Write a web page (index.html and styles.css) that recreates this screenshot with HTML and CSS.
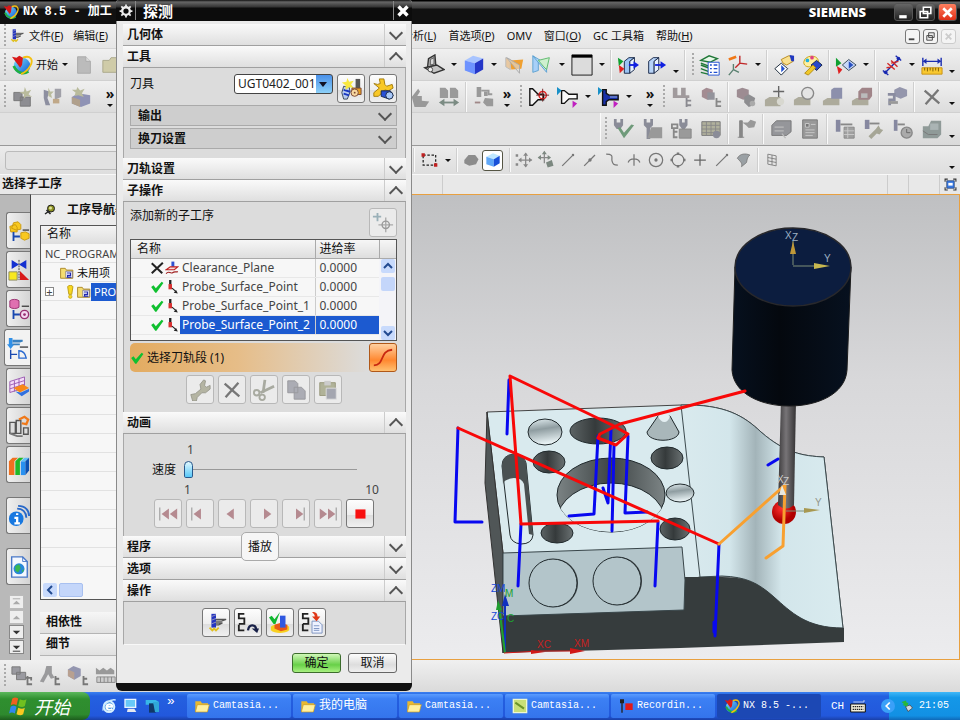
FILE: index.html
```html
<!DOCTYPE html>
<html lang="zh-CN">
<head>
    <meta charset="UTF-8">
    <meta name="viewport" content="width=device-width, initial-scale=1.0">
    <title>NX 8.5 - 加工</title>
    <link rel="stylesheet" href="styles.css">
</head>
<body>
    <!-- Icon sprite -->
    <svg class="sprite" aria-hidden="true">
        <defs>
            <linearGradient id="ball" x1="0" y1="0" x2="1" y2="1"><stop offset="0" stop-color="#7fe8ff"/><stop offset="1" stop-color="#0a50d0"/></linearGradient>
        </defs>
        <symbol id="nx" viewBox="0 0 24 24">
            <circle cx="12" cy="13" r="9" fill="url(#ball)"/>
            <path d="M3 13c3 7 10 10 16 6" fill="none" stroke="#20b040" stroke-width="3"/>
            <path d="M13 4c8-3 12 2 8 9-2 4-6 7-10 9" fill="none" stroke="#f4c010" stroke-width="2"/>
            <path d="M1 3l5 1 3-2 4 2-1 8-2 3z" fill="#d81818"/>
        </symbol>
        <symbol id="tool" viewBox="0 0 24 24">
            <path d="M7 2h5v15H7z" fill="#2434c0"/><path d="M7 5l5-2M7 9l5-2M7 13l5-2" stroke="#99b" stroke-width="1"/>
            <path d="M12 8h11l-5 2h-6M12 12h7l-4 2h-3" fill="none" stroke="#555" stroke-width="1.5"/>
            <path d="M5 17l3 3 2-2 2 2 3-3" fill="none" stroke="#e0c020" stroke-width="2"/>
        </symbol>
        <symbol id="doc" viewBox="0 0 24 24"><path d="M5 3h9l5 5v13H5z" fill="#bbb" stroke="#aaa"/><path d="M14 3v5h5" fill="#ddd" stroke="#aaa"/></symbol>
        <symbol id="folder" viewBox="0 0 24 24"><path d="M2 7h7l2-3h9v16H2z" fill="#cfcba8" stroke="#aaa78a"/></symbol>
        <symbol id="win-folder" viewBox="0 0 24 24"><path d="M2 5h8l2 3h9v12H2z" fill="#e8b830"/><path d="M5 10h18l-3 11H2z" fill="#fff0a0" stroke="#c8981c"/></symbol>
        <symbol id="parts" viewBox="0 0 24 24">
            <path d="M2 7h9v9H2zM9 12h11v10H9z" fill="#8d8d92" stroke="#777"/><path d="M14 1l2 5 5-2-3 5 4 3-6-1-3 3 0-5-5-2 5-1z" fill="#b9bb9c"/>
        </symbol>
        <symbol id="parts2" viewBox="0 0 24 24">
            <path d="M3 4l6 2-2 7 3 8H5L3 13z" fill="#8d8fa0"/><path d="M15 3h7v9l-7 3z" fill="#a0a0a8"/><path d="M13 14h7v5h-7z" fill="#c0a888"/><path d="M8 2l2 4 4 0-3 3 1 4-4-2z" fill="#b9bb9c"/>
        </symbol>
        <symbol id="parts3" viewBox="0 0 24 24">
            <path d="M2 12l7-4 13 2v9l-10 4-10-4z" fill="#8f93b5"/><path d="M2 12l9 3v8l-9-4z" fill="#b0a08c"/><path d="M8 1l3 4 5-2-3 5 2 4-6-2-4 1 1-4-4-3 5 0z" fill="#b9bb9c"/>
        </symbol>
        <symbol id="laptop" viewBox="0 0 24 24"><path d="M5 14l1-9 7-4 1 12z" fill="#b0b0b0" stroke="#333" stroke-width="1.5"/><path d="M8 12V6l4-2v7z" fill="#d8d8d8" stroke="#555"/><path d="M2 15l13-3 8 5-11 4z" fill="#c4c4c4" stroke="#333" stroke-width="1.5"/><circle cx="8" cy="17" r="2.500" fill="#eee" stroke="#444"/></symbol>
        <symbol id="cube" viewBox="0 0 24 24">
            <path d="M2 7l9-5 11 3-9 5z" fill="#a8c4ff"/><path d="M2 7l11 3v12L2 18z" fill="#6d92ff"/><path d="M13 10l9-5v12l-9 5z" fill="#2536c8"/>
        </symbol>
        <symbol id="plane-or" viewBox="0 0 24 24"><path d="M3 4l5 2v11l-5-3z" fill="#e8c8a0" stroke="#bbb"/><path d="M8 7l14-1-2 10-11 1z" fill="#f0a030"/><path d="M4 4l14 17V12z" fill="#ddd" fill-opacity=".6" stroke="#aaa"/></symbol>
        <symbol id="plane-gr" viewBox="0 0 24 24"><path d="M2 2v18l6-2V7z" fill="#a8d0f8" stroke="#5aa0d0"/><path d="M2 2l15 18v-9z" fill="#b8dcf8" stroke="#5aa0d0"/><path d="M8 7l12-3-3 13-3-3z" fill="#cff0cf" stroke="#58b868"/></symbol>
        <symbol id="swatch" viewBox="0 0 24 24"><path d="M1 1h22v22H1z" fill="#dcdcdc" stroke="#111"/><path d="M1 1h22v3H1z" fill="#000"/></symbol>
        <symbol id="clip-box" viewBox="0 0 24 24"><path d="M8 8l5-4h6l-5 4v13H8z" fill="#9cc4f4" stroke="#124"/><path d="M14 8l5-4v13l-5 4z" fill="#e8f2ff" stroke="#124"/><path d="M13 12h6" stroke="#1020e0" stroke-width="2"/><path d="M18 8l6 4-6 4z" fill="#1020e0"/><path d="M1 4l6 4-5 5z" fill="#10a030"/><path d="M2 12l6 4-5 5z" fill="#e02020"/></symbol>
        <symbol id="clip-one" viewBox="0 0 24 24"><path d="M4 8l5-4h6l-5 4v13H4z" fill="#b8d4f8" stroke="#124"/><path d="M10 8l5-4v13l-5 4z" fill="#e8f2ff" stroke="#124"/><path d="M11 12h7" stroke="#1020e0" stroke-width="2"/><path d="M17 8l6 4-6 4z" fill="#1020e0"/></symbol>
        <symbol id="layers" viewBox="0 0 24 24"><path d="M2 7l9-5 9 3-8 4zM2 12l8 3M2 16l8 3M2 20l8 2M2 10l8 3" fill="#e8f8e8" stroke="#207838" stroke-width="1.5"/><path d="M10 9h12v14H10z" fill="#fff" stroke="#2050d0"/><path d="M12 12h2m2 0h4m-8 4h2m2 0h4m-8 4h2m2 0h4" stroke="#2050d0" stroke-width="1.5"/></symbol>
        <symbol id="axes" viewBox="0 0 24 24"><path d="M2 23l5-6V11m0 6l6 3" fill="none" stroke="#5a8070" stroke-width="1.5"/><path d="M14 2v8l8 1m-8-1l-5 5" fill="none" stroke="#c02828" stroke-width="1.5"/><path d="M2 6l8-3" stroke="#f07818" stroke-width="3"/></symbol>
        <symbol id="diamond" viewBox="0 0 24 24"><path d="M2 16l7-6 7 6-7 7z" fill="#fff" stroke="#123"/><path d="M9 12l4 4-4 4z" fill="#2050d0"/><path d="M9 6l8-4 5 1v5l-7 4-4-2z" fill="#f8e090" stroke="#b88818"/><path d="M18 1l5 1v6h-3z" fill="#2038c0"/></symbol>
        <symbol id="palette" viewBox="0 0 24 24"><path d="M3 9C4 1 17 0 19 7c0 5-6 2-7 6-3 2-9 1-9-4z" fill="#fff0a0" stroke="#c8a010"/><circle cx="7" cy="7" r="2" fill="#20b0e0"/><circle cx="12" cy="4" r="2" fill="#e04080"/><path d="M11 12l6-5 6 5-6 6z" fill="#2848c8" stroke="#124"/><path d="M4 21l9-9 3 3-8 8z" fill="#f0c828" stroke="#b08810"/></symbol>
        <symbol id="flags" viewBox="0 0 24 24"><path d="M1 4l6 6-6 4z" fill="#10a030"/><path d="M2 13l6 4-4 5z" fill="#e02020"/><path d="M8 12l7-6 8 6-8 6z" fill="#c8d8f8" stroke="#345"/><path d="M15 8v8l5-4z" fill="#2850c0"/></symbol>
        <symbol id="measure" viewBox="0 0 24 24"><path d="M5 20L20 5M2 18l6 5M16 2l6 5" stroke="#1828b0" stroke-width="1.5"/><circle cx="5" cy="20" r="2" fill="#1828b0"/><circle cx="19" cy="5" r="2" fill="#1828b0"/><path d="M7 10l8 7M11 7l7 7M6 15l7-1M11 10l8-2" stroke="#d02828" stroke-width="1.5"/></symbol>
        <symbol id="ruler" viewBox="0 0 24 24"><path d="M2 4v9M22 4v9M3 8h18" stroke="#1a2cb0" stroke-width="1.5"/><path d="M6 5L2 8l4 3zM18 5l4 3-4 3z" fill="#1a2cb0"/><path d="M1 15h22v7H1z" fill="#f8c830" stroke="#c89010"/><path d="M4 15v3m3-3v4m3-4v3m3-3v4m3-4v3m3-3v4" stroke="#7a5a00"/></symbol>
        <symbol id="cone-x" viewBox="0 0 24 24"><path d="M2 3h3l6 6h6v6h-6l-6 6H2z" fill="#f4f4f4" stroke="#111" stroke-width="1.5"/><circle cx="16" cy="10" r="4" fill="none" stroke="#e02020" stroke-width="1.5"/><path d="M9 10h14M16 3v14" stroke="#702020"/></symbol>
        <symbol id="cone-w" viewBox="0 0 24 24"><path d="M5 5h3l5 4h9v5h-9l-5 5H5z" fill="#fafafa" stroke="#111" stroke-width="1.5"/><path d="M0 1l5 4-5 5z" fill="#1890c8"/><path d="M17 16l5 3-5 5z" fill="#c020c0"/></symbol>
        <symbol id="cone-b" viewBox="0 0 24 24"><path d="M5 4h4v4l3 2h10v5H12l-3 2v4H5z" fill="#1830a8" stroke="#111" stroke-width="1.5"/><path d="M0 1l5 4-5 5z" fill="#1890c8"/><path d="M17 16l5 3-5 5z" fill="#c020c0"/><path d="M13 12h8" stroke="#a8c0f0"/></symbol>
        <symbol id="g-hand" viewBox="0 0 24 24"><path d="M3 12l7-9 2 3-3 5h5v5l8 1-4 6H6z" fill="#999"/></symbol>
        <symbol id="g-pages" viewBox="0 0 24 24"><path d="M2 2h6l3 3v8H2zM13 2h6l3 3v8h-9z" fill="#9a9a9a"/><path d="M4 18h16" stroke="#7c8c84" stroke-width="2"/><path d="M7 14l-6 4 6 4zM17 14l6 4-6 4z" fill="#7c8c84"/></symbol>
        <symbol id="g-tool2" viewBox="0 0 24 24"><path d="M4 1h5v11H4zM12 6h4v5h-4zM13 13l9 1v8h-7l-4-4z" fill="#999"/><path d="M9 5h8v4h4" fill="none" stroke="#999" stroke-width="2"/><path d="M2 18h6" stroke="#a08888" stroke-width="2"/></symbol>
        <symbol id="g-tree" viewBox="0 0 24 24"><path d="M2 2h5v8h4V2h5v8h4v3H2z" fill="#a09a9c"/><path d="M17 13v10M17 16h5M17 21h5" stroke="#8a8a90" stroke-width="2"/></symbol>
        <symbol id="g-blocks" viewBox="0 0 24 24"><path d="M2 5l5-3 7 2v9l-6 2-6-3z" fill="#a38c92"/><path d="M8 7h8v8H8z" fill="#93939b"/><path d="M18 13v10M18 17h5M18 22h5" stroke="#888" stroke-width="2"/></symbol>
        <symbol id="g-parts" viewBox="0 0 24 24"><path d="M1 2h9v8H1zM6 8h10v8H6z" fill="#9a9aa0" stroke="#777"/><path d="M18 12v10M16 14h6v3M18 21h5" fill="none" stroke="#777" stroke-width="2"/></symbol>
        <symbol id="g-holder" viewBox="0 0 24 24"><path d="M8 1h6v8l3 5-4 1-3-5-5 9-4-1 5-9z" fill="#9a9a9c"/><path d="M18 12v10M18 15h4M18 21h5" stroke="#777" stroke-width="2"/></symbol>
        <symbol id="g-geo" viewBox="0 0 24 24"><path d="M1 5l6-4 8 3v8l-7 4-7-4z" fill="#9496b0"/><path d="M1 5l7 3v8l-7-4z" fill="#b8a090"/><path d="M18 12v10M18 15h4M18 21h5" stroke="#777" stroke-width="2"/></symbol>
        <symbol id="g-method" viewBox="0 0 24 24"><path d="M1 8V3l4 3 4-3 4 3 4-3 4 3v4H1z" fill="#999"/><path d="M2 13h20v6H2zM6 13v6M10 13v6M14 13v6M18 13v6" fill="#ccc" stroke="#888"/></symbol>
        <symbol id="g-find" viewBox="0 0 24 24"><path d="M2 4l6-2 7 2v9l-6 2-7-3z" fill="#9d8c92"/><path d="M10 12l5-3 7 4-2 8-5 2-5-5z" fill="#8d8d90"/><circle cx="19" cy="19" r="3" fill="#aaa"/></symbol>
        <symbol id="g-plus" viewBox="0 0 24 24"><path d="M1 15l5-3h12v10H1z" fill="#adab9c"/><circle cx="18" cy="17" r="4" fill="#d8d8d0"/><path d="M10 6h12M16 0v12" stroke="#666" stroke-width="1.5"/></symbol>
        <symbol id="g-circ" viewBox="0 0 24 24"><path d="M1 15l5-3h13v9H1z" fill="#adab9c"/><circle cx="16" cy="8" r="6.500" fill="#e4e4e4" stroke="#888" stroke-width="1.500"/></symbol>
        <symbol id="g-box" viewBox="0 0 24 24"><path d="M1 16l5-3h13v8H1z" fill="#adab9c"/><path d="M10 4l3-2h9v12H10z" fill="#8c90ac"/></symbol>
        <symbol id="g-box2" viewBox="0 0 24 24"><path d="M1 16l5-3h13v8H1z" fill="#adab9c"/><path d="M8 6l4-4h11v9l-3 4H8z" fill="#a08488"/><path d="M11 8h7v5h-7z" fill="#bbb"/></symbol>
        <symbol id="g-move" viewBox="0 0 24 24"><path d="M9 4l6-3 8 3v7l-7 3-7-3z" fill="#9496ac"/><path d="M2 9h7v6H4v6" fill="none" stroke="#8a8ca0" stroke-width="3"/><path d="M3 18h10" stroke="#999" stroke-width="3"/></symbol>
        <symbol id="g-x" viewBox="0 0 24 24"><path d="M4 5l16 14M19 4L5 20" stroke="#777" stroke-width="2.500"/></symbol>
        <symbol id="g-check" viewBox="0 0 24 24"><path d="M1 1h3v4h4V1h3v7l-3 4H4L1 8z" fill="#8a8c98"/><path d="M5 11l7 11L23 8l-3-1-8 9-4-6z" fill="#6f9a7a"/></symbol>
        <symbol id="g-sheet" viewBox="0 0 24 24"><path d="M2 1h3v4h4V1h3v7l-3 3v12H5V11L2 8z" fill="#8a8c98"/><path d="M10 10h12v12H6z" fill="#999"/></symbol>
        <symbol id="g-list" viewBox="0 0 24 24"><path d="M9 1h3v4h3V1h3v7l-3 4h-3L9 8z" fill="#8a8c98"/><path d="M1 7h6v4H1zM3 11v10h4M3 15h4" fill="none" stroke="#888" stroke-width="2"/><path d="M9 12h13v10H9z" fill="#9a9a9a" stroke="#888"/></symbol>
        <symbol id="g-grid" viewBox="0 0 24 24"><path d="M2 4h20v15H2z" fill="#b0b09c" stroke="#777"/><path d="M2 8h20M2 12h20M2 16h20M7 4v15M12 4v15M17 4v15" stroke="#888"/><circle cx="18" cy="18" r="4" fill="#8a8c98"/></symbol>
        <symbol id="g-flag" viewBox="0 0 24 24"><path d="M5 3h3v18H5zM3 21h7" fill="#888" stroke="#888"/><path d="M8 5h6l3-3 6 2-2 6-6 1-3-3" fill="#999"/></symbol>
        <symbol id="g-stack" viewBox="0 0 24 24"><path d="M2 8l5-5h16v12l-5 4H2z" fill="#95969a" stroke="#777"/><path d="M5 10h10M5 14h10M13 17l4 5" stroke="#bbb" stroke-width="1.500"/></symbol>
        <symbol id="g-report" viewBox="0 0 24 24"><path d="M4 2h16v20H4z" fill="#999" stroke="#777"/><path d="M7 6h4v4H7zM13 7h5M7 13h10M7 16h10M7 19h8" stroke="#ccc" fill="#777"/></symbol>
        <symbol id="g-post" viewBox="0 0 24 24"><path d="M2 2h5v13H2z" fill="#8688a0"/><path d="M7 7h13" stroke="#888" stroke-width="2"/><path d="M11 10h11v12H11z" fill="#a0a0a0" stroke="#888"/><path d="M11 14h11M11 18h11M15 10v12" stroke="#ccc"/></symbol>
        <symbol id="g-wrench" viewBox="0 0 24 24"><path d="M2 2h5v10H2z" fill="#8688a0"/><path d="M7 6h11" stroke="#888" stroke-width="2"/><path d="M6 20l8-8 3-4 2 4 3 1-4 5-3-1-6 6z" fill="#a6a696"/></symbol>
        <symbol id="g-clock" viewBox="0 0 24 24"><path d="M2 2h4v12H2z" fill="#8688a0"/><path d="M6 7h8" stroke="#888" stroke-width="2"/><circle cx="16" cy="16" r="6" fill="#aaa" stroke="#888" stroke-width="1.500"/><path d="M16 12v4h4" fill="none" stroke="#666"/></symbol>
        <symbol id="g-mach" viewBox="0 0 24 24"><path d="M2 9h6l3-6h11v15l-4 4H2z" fill="#8f9a98"/><path d="M10 6h9v7h-9z" fill="#aab4b4"/><path d="M2 14l6 4h10" stroke="#777" fill="none"/></symbol>
        <symbol id="select-box" viewBox="0 0 24 24"><path d="M5 6h15v12H5z" fill="none" stroke="#222" stroke-dasharray="3 2" stroke-width="1.500"/><path d="M3 4h4v4H3zM18 16h4v4h-4z" fill="#c02020"/></symbol>
        <symbol id="blob" viewBox="0 0 24 24"><path d="M4 12l5-6 8 0 4 5-3 6-8 2-6-3z" fill="#8c8c8c"/></symbol>
        <symbol id="shaded" viewBox="0 0 24 24"><path d="M4 8l8-4 8 3-7 4z" fill="#bfe8ff"/><path d="M4 8l9 3v9l-9-3z" fill="#60a8f8"/><path d="M13 11l7-4v9l-7 4z" fill="#1850d8"/></symbol>
        <symbol id="s-move" viewBox="0 0 24 24"><path d="M14 4v16M7 12h14" stroke="#888" stroke-width="1.500"/><path d="M11 7l3-4 3 4zM11 17l3 4 3-4zM18 9l4 3-4 3zM9 9l-4 3 4 3zM2 5h3v3H2zM2 16h3v3H2z" fill="#888"/></symbol>
        <symbol id="s-move2" viewBox="0 0 24 24"><path d="M10 2v14M3 9h14" stroke="#888" stroke-width="1.500"/><path d="M7 5l3-4 3 4zM14 6l4 3-4 3zM6 6L2 9l4 3zM12 15l7-3 2 7-7 2z" fill="#7c8880"/></symbol>
        <symbol id="s-line" viewBox="0 0 24 24"><path d="M5 19L17 7" stroke="#777" stroke-width="1.500"/><circle cx="18" cy="6" r="1.500" fill="#777"/></symbol>
        <symbol id="s-mid" viewBox="0 0 24 24"><path d="M5 19L18 6" stroke="#777" stroke-width="1.500"/><circle cx="12" cy="12" r="2" fill="#777"/></symbol>
        <symbol id="s-curve" viewBox="0 0 24 24"><path d="M5 5c10 0 6 4 7 8s2 5 7 5" fill="none" stroke="#777" stroke-width="1.500"/></symbol>
        <symbol id="s-int" viewBox="0 0 24 24"><path d="M12 5v14M5 15c2-6 12-6 14 0" fill="none" stroke="#777" stroke-width="1.500"/></symbol>
        <symbol id="s-center" viewBox="0 0 24 24"><circle cx="12" cy="12" r="8" fill="none" stroke="#777" stroke-width="1.500"/><circle cx="12" cy="12" r="2" fill="#777"/></symbol>
        <symbol id="s-quad" viewBox="0 0 24 24"><circle cx="12" cy="12" r="7" fill="none" stroke="#777" stroke-width="1.500"/><path d="M12 3v3M12 18v3M3 12h3M18 12h3" stroke="#777" stroke-width="3"/></symbol>
        <symbol id="s-plus" viewBox="0 0 24 24"><path d="M12 5v14M5 12h14" stroke="#666" stroke-width="1.500"/></symbol>
        <symbol id="s-face" viewBox="0 0 24 24"><path d="M4 10c3-6 10-6 15-4-3 3-3 4-4 9l-6 5c1-4 0-5-5-10z" fill="#9aa0a4" stroke="#777"/></symbol>
        <symbol id="s-grid" viewBox="0 0 24 24"><path d="M7 5l10 2v12L7 17zM12 6v12M7 9l10 2M7 13l10 2" fill="none" stroke="#777"/></symbol>
        <symbol id="fit" viewBox="0 0 24 24"><path d="M2 7V2h5M17 2h5v5M22 17v5h-5M7 22H2v-5" fill="none" stroke="#333" stroke-width="2"/><path d="M5 5h14v14H5z" fill="#3878e0" stroke="#124"/><path d="M8 9h8v5H8z" fill="#fff"/></symbol>

        <symbol id="r-asm" viewBox="0 0 24 24"><path d="M6 3l5-1 3 3v5l-5 1-5-2zM2 7l6-2 2 3v5H3z" fill="#f8c820" stroke="#c89810"/><path d="M14 14l5-1 4 2v5l-5 2-4-2z" fill="#f8c820" stroke="#c89810"/><path d="M6 13v10M6 18h7" stroke="#1848b0" stroke-width="2"/><path d="M16 11h7" stroke="#444" stroke-width="1.500"/></symbol>
        <symbol id="r-con" viewBox="0 0 24 24"><path d="M4 1l8 5-8 5zM20 1l-8 5 8 5z" fill="#1430d0"/><path d="M12 1v22" stroke="#333" stroke-dasharray="2 1"/><path d="M1 14h9v9H1z" fill="#f8e820" stroke="#886"/><path d="M13 13l10 10H13z" fill="#d81818"/></symbol>
        <symbol id="r-part" viewBox="0 0 24 24"><path d="M2 3c2-2 8-2 10 0v7c-2 2-8 2-10 0z" fill="#e070b0" stroke="#983070"/><path d="M6 13v10M6 18h7" stroke="#1848b0" stroke-width="2"/><path d="M15 9h8" stroke="#444" stroke-width="1.500"/><circle cx="18" cy="18" r="4.500" fill="#f4d8f0" stroke="#983070" stroke-width="1.500"/><circle cx="18" cy="18" r="1.500" fill="#983070"/></symbol>
        <symbol id="r-op" viewBox="0 0 24 24"><path d="M2 1h4v7h2l-4 5-4-5h2z" fill="#3090e8"/><path d="M6 4h11l-3 1H6M6 8h8" fill="none" stroke="#3880c0" stroke-width="2"/><path d="M4 14v10M4 19h7" stroke="#1848b0" stroke-width="1.500"/><path d="M14 11h9" stroke="#444" stroke-width="1.500"/><path d="M13 15c5 0 7 3 8 8h-8z" fill="none" stroke="#2868d0" stroke-width="1.500"/></symbol>
        <symbol id="r-feat" viewBox="0 0 24 24"><path d="M2 6l16-5v12L2 18z" fill="#f4dcf8" stroke="#9858b0"/><path d="M2 10l16-5M2 14l16-5M7 5v12M12 3v12" stroke="#9858b0"/><path d="M6 13l10-4 7 4-10 5z" fill="#f88818"/><path d="M8 17l7 5 8-5v-3l-9 4z" fill="#3070e0"/></symbol>
        <symbol id="r-mach" viewBox="0 0 24 24"><path d="M2 8h6v12H2zM9 6h5v14H9zM17 14h5v7h-5z" fill="#ddd" stroke="#555" stroke-width="1.500"/><path d="M2 20l8 3h6" fill="none" stroke="#777" stroke-width="2"/><path d="M12 5l6-3 4 3-2 5-5-1" fill="none" stroke="#f07818" stroke-width="2.500"/></symbol>
        <symbol id="r-books" viewBox="0 0 24 24"><path d="M1 8h6v15H1zM1 8l4-4h6L7 8z" fill="#f07020"/><path d="M8 8h5v15H8zM8 8l4-4h5l-4 4z" fill="#20b828"/><path d="M14 8h5v15h-5z" fill="#2890f0"/><path d="M14 8l4-4h5l-4 4z" fill="#60c0f8"/><path d="M19 8l4-4v14l-4 5z" fill="#0c50b0"/></symbol>
        <symbol id="r-info" viewBox="0 0 24 24"><circle cx="9" cy="15" r="8" fill="#1878e0"/><path d="M10 9v2M7 14h3v6M7 20h6" stroke="#fff" stroke-width="2.500" fill="none"/><path d="M10 4c6 0 10 4 10 10M11 1c8 0 12 5 12 11" fill="none" stroke="#2868c8" stroke-width="2"/></symbol>
        <symbol id="r-web" viewBox="0 0 24 24"><path d="M4 1h12l5 5v17H4z" fill="#f4f8ff" stroke="#4878c8" stroke-width="1.500"/><path d="M16 1v5h5" fill="none" stroke="#4878c8"/><circle cx="12" cy="14" r="6" fill="#2888d8"/><path d="M8 11l4-2 2 4-3 5-3-2zM15 16l3-2-2 4z" fill="#38b850"/></symbol>
        <symbol id="pin" viewBox="0 0 24 24"><circle cx="14" cy="9" r="7" fill="#8c9020" stroke="#222" stroke-width="2"/><circle cx="13" cy="8" r="3" fill="#e0e4a0"/><path d="M2 20l7-5M5 12l8 8" stroke="#222" stroke-width="3"/></symbol>
        <symbol id="op-folder" viewBox="0 0 24 24"><path d="M1 4h8l2 3h11v14H1z" fill="#f4dc70" stroke="#a88420" stroke-width="1.500"/><path d="M10 9h11v11H10z" fill="#fff" stroke="#448"/><path d="M12 12h6v4h-5v3h6" fill="none" stroke="#2028b0" stroke-width="2"/></symbol>
        <symbol id="bang" viewBox="0 0 24 24"><path d="M8 3c0-3 9-3 9 0l-2 13h-5z" fill="#f8d820" stroke="#b89810" stroke-width="1.500"/><circle cx="12.500" cy="20" r="3" fill="#f8d820" stroke="#b89810"/></symbol>

        <symbol id="gear" viewBox="0 0 24 24"><circle cx="12" cy="12" r="6.500" fill="none" stroke="#eee" stroke-width="4"/><path d="M12 1v4M12 19v4M1 12h4M19 12h4M4 4l3 3M17 17l3 3M4 20l3-3M17 7l3-3" stroke="#eee" stroke-width="3"/></symbol>
        <symbol id="new-tool" viewBox="0 0 24 24"><path d="M4 9l6 1 1 5-3 8H4l-2-7z" fill="#b8ccf0" stroke="#345"/><path d="M4 17l6 2M4 13l7 2" stroke="#1838c0" stroke-width="2"/><path d="M8 0l2 4 5-1-3 4 3 4-5-1-4 3 0-5-4-3 5-1z" fill="#f8e840"/><path d="M17 1h5v12h-5z" fill="#555"/><path d="M13 11h10v7H13z" fill="#e8a020" stroke="#743"/><circle cx="16" cy="16" r="4" fill="#f8d8a0" stroke="#743"/><circle cx="16" cy="16" r="1" fill="#743"/></symbol>
        <symbol id="edit-tool" viewBox="0 0 24 24"><path d="M2 6l4 1 3-1-1-5h5l1 6 2 2 6-2 1 4-5 3-4-1-7 7-5 0 0-4 6-5z" fill="#f8c828" stroke="#a07808"/><path d="M10 14l10 0 3 5-4 4-9-3z" fill="#2850d8" stroke="#124"/><circle cx="19" cy="19" r="4" fill="#a8c8f8" stroke="#124"/></symbol>
        <symbol id="add-pt" viewBox="0 0 24 24"><path d="M6 1v9M1 5h9" stroke="#9ab0b8" stroke-width="2"/><path d="M15 6v16M7 14h16" stroke="#aaa" stroke-width="1.500"/><circle cx="15" cy="14" r="4" fill="none" stroke="#999" stroke-width="1.500"/></symbol>
        <symbol id="cross" viewBox="0 0 24 24"><path d="M3 4l18 17M22 3L3 21" stroke="#222" stroke-width="3.500"/></symbol>
        <symbol id="ok" viewBox="0 0 24 24"><path d="M2 12l4-3 4 5L20 3l3 2-12 17H9z" fill="#10c030"/></symbol>
        <symbol id="clearance" viewBox="0 0 24 24"><path d="M11 1h5v10h-5z" fill="#3050d0"/><path d="M2 15l7-5h13l-6 5z" fill="#f8d8d8" stroke="#c02020" stroke-width="2"/><path d="M2 22c4-7 7 1 11-2s6 0 9-2" fill="none" stroke="#a02020" stroke-width="2"/></symbol>
        <symbol id="probe" viewBox="0 0 24 24"><path d="M7 0h4v8H7z" fill="#222"/><path d="M6 7h6v9H6z" fill="#d83030"/><path d="M12 14l7 6" stroke="#222" stroke-width="2"/><path d="M22 23l-7-1 4-5z" fill="#222"/></symbol>
        <symbol id="curve" viewBox="0 0 24 24"><path d="M2 20c12 0 6-16 20-17" fill="none" stroke="#c82810" stroke-width="2"/></symbol>
        <symbol id="wrench" viewBox="0 0 24 24"><path d="M2 17l5-1 6-5-1-5 4-5 2 1-1 5 2 2 4-2 0 4-5 4-4 0-5 5-1 4-4 0z" fill="#b4b4a2" stroke="#98988c"/></symbol>
        <symbol id="cut" viewBox="0 0 24 24"><path d="M13 1l-2 14M23 8L8 15" stroke="#a8aaa0" stroke-width="3"/><circle cx="4" cy="15" r="3" fill="none" stroke="#a8aaa0" stroke-width="2"/><circle cx="10" cy="20" r="3" fill="none" stroke="#a8aaa0" stroke-width="2"/></symbol>
        <symbol id="copy" viewBox="0 0 24 24"><path d="M3 2h8l3 3v10H3zM10 9h8l4 4v9H10z" fill="#abacb4" stroke="#98989c"/></symbol>
        <symbol id="paste" viewBox="0 0 24 24"><path d="M3 4h17v14H3z" fill="#b0b298" stroke="#98987c"/><path d="M8 2h7v5H8z" fill="#ccc"/><path d="M10 10h11v12H10z" fill="#a4a6b0" stroke="#ddd"/></symbol>
        <symbol id="first" viewBox="0 0 24 24"><path d="M3 5v14" stroke="#aaa" stroke-width="1.500"/><path d="M13 6v12l-8-6zM22 6v12l-8-6z" fill="#b58a90"/></symbol>
        <symbol id="prev" viewBox="0 0 24 24"><path d="M3 5v14" stroke="#aaa" stroke-width="1.500"/><path d="M13 6v12l-8-6z" fill="#b58a90"/></symbol>
        <symbol id="back" viewBox="0 0 24 24"><path d="M14 6v12l-8-6z" fill="#b58a90"/></symbol>
        <symbol id="play" viewBox="0 0 24 24"><path d="M12 6v12l8-6z" fill="#b58a90"/></symbol>
        <symbol id="next" viewBox="0 0 24 24"><path d="M21 5v14" stroke="#aaa" stroke-width="1.500"/><path d="M12 6v12l8-6z" fill="#b58a90"/></symbol>
        <symbol id="last" viewBox="0 0 24 24"><path d="M21 5v14" stroke="#aaa" stroke-width="1.500"/><path d="M3 6v12l8-6zM12 6v12l8-6z" fill="#b58a90"/></symbol>
        <symbol id="stop" viewBox="0 0 24 24"><path d="M7 7h11v10H7z" fill="#f81010"/></symbol>
        <symbol id="replay" viewBox="0 0 24 24"><path d="M8 2H2v5h6v6H2M2 14v6h6M8 13H3" fill="none" stroke="#222" stroke-width="2"/><path d="M12 20c1-7 8-7 9-1" fill="none" stroke="#182048" stroke-width="2.500"/><path d="M16 18h8l-2 5z" fill="#182048"/></symbol>
        <symbol id="verify" viewBox="0 0 24 24"><path d="M2 16c4-4 16-4 20 0v4c-4 4-16 4-20 0z" fill="#f8d020"/><path d="M6 14l6-2 8 2v5l-7 2-7-3z" fill="#e85818"/><path d="M12 4h6v13h-6z" fill="#3058e0"/><path d="M0 6l3-2 3 4 6-8-5 13H5z" fill="#10b830"/></symbol>
        <symbol id="list" viewBox="0 0 24 24"><path d="M8 2H2v5h6v6H2v0M2 13v7h6" fill="none" stroke="#222" stroke-width="2"/><path d="M12 10h7l4 4v9H12z" fill="#eef2ff" stroke="#7890c0"/><path d="M14 15h6m-6 3h6m-6 2h6" stroke="#7890c0"/><path d="M12 0c5 0 6 2 6 5h3l-4 5-5-5h3c0-2-1-3-3-5z" fill="#e03818"/></symbol>

        <symbol id="xp" viewBox="0 0 24 24"><path d="M4 3c3-2 5-1 7 0l-2 8c-2-1-4-2-7 0z" fill="#f06020"/><path d="M13 4c3 1 5 2 8 0l-2 8c-3 2-5 1-8 0z" fill="#70c020"/><path d="M2 13c3-2 5-1 7 0l-2 8c-2-1-4-2-7 0z" fill="#3088f0"/><path d="M11 14c3 1 5 2 8 0l-2 8c-3 2-5 1-8 0z" fill="#f8c820"/></symbol>
        <symbol id="ie" viewBox="0 0 24 24"><circle cx="12" cy="13" r="8" fill="#2080d8" stroke="#d8f0ff" stroke-width="3"/><path d="M8 13h9c0-5-8-5-9 0 0 5 6 6 9 3" fill="none" stroke="#fff" stroke-width="3"/><path d="M3 19C2 10 14 1 22 3" fill="none" stroke="#c8e8ff" stroke-width="2"/></symbol>
        <symbol id="desk" viewBox="0 0 24 24"><path d="M3 2h16v12H3z" fill="#68c8f8" stroke="#e8f4ff" stroke-width="2"/><path d="M7 16h10l3 5H6z" fill="#e4e8f0"/></symbol>
        <symbol id="tim" viewBox="0 0 24 24"><path d="M1 3h15l5 3-5 4H1z" fill="#38b8e8"/><path d="M6 8h10v14H6z" fill="#103868"/><path d="M12 6h9v15h-6z" fill="#30a8d8"/></symbol>
        <symbol id="cam" viewBox="0 0 24 24"><path d="M2 2h20v20H2z" fill="#c8e078" stroke="#eef8d0" stroke-width="2"/><path d="M5 7l13 9" stroke="#6a9428" stroke-width="3"/></symbol>
        <symbol id="rec" viewBox="0 0 24 24"><path d="M3 2h6v6H3zM5 8h2v14H5z" fill="#222"/><path d="M11 8h11v10H11z" fill="#e01818"/></symbol>
        <symbol id="kbd" viewBox="0 0 24 24"><path d="M5 6h16v-3" fill="none" stroke="#fff"/><path d="M1 9h22v12H1z" fill="#f4f0dc" stroke="#111" stroke-width="1.500"/><path d="M4 13h16M4 17h16" stroke="#222" stroke-width="2" stroke-dasharray="2 1"/></symbol>
        <symbol id="usb" viewBox="0 0 24 24"><path d="M9 13l9-3 5 6-9 7z" fill="#d0d8e0" stroke="#444" stroke-width="1.500"/><path d="M1 4l9-3 1 4 4 1-3 7-9-3 3-2z" fill="#28b838"/></symbol>
    </svg>

    <div class="app">
        <header class="titlebar">
            <svg class="ic16"><use href="#nx"/></svg>
            <span class="app-title">NX 8.5 - 加工</span>
            <span class="brand">SIEMENS</span>
            <button class="win-btn" aria-label="最小化"><svg viewBox="0 0 16 16"><path d="M4 12h7" stroke="#fff" stroke-width="3"/></svg></button>
            <button class="win-btn" aria-label="还原"><svg viewBox="0 0 16 16"><path d="M6 3h7v6h-7zM3 7h7v6H3z" fill="#333" stroke="#fff" stroke-width="1.500"/></svg></button>
            <button class="win-btn close" aria-label="关闭"><svg viewBox="0 0 16 16"><path d="M4 4l8 8M12 4l-8 8" stroke="#fff" stroke-width="2.500"/></svg></button>
        </header>

        <nav class="menubar">
            <div class="menu-left">
                <span class="grip"></span>
                <svg class="ic16"><use href="#tool"/></svg>
                <button>文件(<u>F</u>)</button>
                <button>编辑(<u>E</u>)</button>
            </div>
            <div class="menu-right">
                <button>分析(<u>L</u>)</button>
                <button>首选项(<u>P</u>)</button>
                <button>OMV</button>
                <button>窗口(<u>O</u>)</button>
                <button>GC 工具箱</button>
                <button>帮助(<u>H</u>)</button>
            </div>
            <div class="mdi">
                <button aria-label="最小化窗口"><svg viewBox="0 0 14 14"><path d="M3 10h6" stroke="#444" stroke-width="2"/></svg></button>
                <button aria-label="还原窗口"><svg viewBox="0 0 14 14"><path d="M5 3h6v5h-6zM3 6h6v5H3z" fill="#eee" stroke="#444"/></svg></button>
                <button class="off" aria-label="关闭窗口"><svg viewBox="0 0 14 14"><path d="M4 4l6 6M10 4l-6 6" stroke="#ccc" stroke-width="2"/></svg></button>
            </div>
        </nav>

        <div class="toolbar">
            <div class="group">
                <span class="grip"></span>
                <button class="start-nx"><svg class="ic"><use href="#nx"/></svg>开始<i class="arrow"></i></button>
                <button class="tb"><svg class="ic"><use href="#doc"/></svg></button>
                <button class="tb"><svg class="ic"><use href="#folder"/></svg></button>
            </div>
            <div class="group end">
                <button class="tb"><svg class="ic"><use href="#laptop"/></svg></button><i class="dd"></i>
                <button class="tb"><svg class="ic"><use href="#cube"/></svg></button><i class="dd"></i>
                <button class="tb"><svg class="ic"><use href="#plane-or"/></svg></button>
                <button class="tb"><svg class="ic"><use href="#plane-gr"/></svg></button><i class="dd"></i>
                <button class="tb"><svg class="ic"><use href="#swatch"/></svg></button><i class="dd"></i>
                <i class="sep"></i>
                <button class="tb"><svg class="ic"><use href="#clip-box"/></svg></button>
                <button class="tb"><svg class="ic"><use href="#clip-one"/></svg></button><i class="dd low"></i>
                <i class="sep"></i><span class="grip"></span>
                <button class="tb"><svg class="ic"><use href="#layers"/></svg></button>
                <button class="tb"><svg class="ic"><use href="#axes"/></svg></button><i class="dd"></i>
                <i class="sep"></i>
                <button class="tb"><svg class="ic"><use href="#diamond"/></svg></button>
                <button class="tb"><svg class="ic"><use href="#palette"/></svg></button>
                <i class="sep"></i>
                <button class="tb"><svg class="ic"><use href="#flags"/></svg></button><i class="dd"></i>
                <i class="sep"></i>
                <button class="tb"><svg class="ic"><use href="#measure"/></svg></button><i class="dd"></i>
                <button class="tb"><svg class="ic"><use href="#ruler"/></svg></button><i class="dd low"></i>
            </div>
        </div>

        <div class="toolbar wide">
            <div class="group">
                <span class="grip"></span>
                <button class="tb"><svg class="ic"><use href="#parts"/></svg></button>
                <button class="tb"><svg class="ic"><use href="#parts2"/></svg></button>
                <button class="tb"><svg class="ic"><use href="#parts3"/></svg></button>
                <span class="more spaced">»</span>
            </div>
            <div class="group end">
                <button class="tb"><svg class="ic"><use href="#g-hand"/></svg></button>
                <button class="tb"><svg class="ic"><use href="#g-pages"/></svg></button>
                <i class="sep"></i>
                <button class="tb"><svg class="ic"><use href="#g-tool2"/></svg></button>
                <span class="more">»</span>
                <span class="grip"></span>
                <button class="tb"><svg class="ic"><use href="#cone-x"/></svg></button>
                <button class="tb"><svg class="ic"><use href="#cone-w"/></svg></button><i class="dd"></i>
                <button class="tb"><svg class="ic"><use href="#cone-b"/></svg></button><i class="dd"></i>
                <span class="more spaced">»</span>
                <span class="grip"></span>
                <button class="tb"><svg class="ic"><use href="#g-tree"/></svg></button>
                <button class="tb"><svg class="ic"><use href="#g-blocks"/></svg></button>
                <i class="sep"></i>
                <button class="tb"><svg class="ic"><use href="#g-find"/></svg></button>
                <button class="tb"><svg class="ic"><use href="#g-plus"/></svg></button>
                <button class="tb"><svg class="ic"><use href="#g-circ"/></svg></button>
                <button class="tb"><svg class="ic"><use href="#g-box"/></svg></button>
                <button class="tb"><svg class="ic"><use href="#g-box2"/></svg></button>
                <i class="sep"></i>
                <button class="tb"><svg class="ic"><use href="#g-move"/></svg></button>
                <i class="sep"></i>
                <button class="tb"><svg class="ic"><use href="#g-x"/></svg></button><i class="dd low"></i>
            </div>
        </div>

        <div class="toolbar wide empty-left">
            <div class="group end row3">
                <span class="grip"></span>
                <button class="tb"><svg class="ic"><use href="#g-check"/></svg></button>
                <button class="tb"><svg class="ic"><use href="#g-sheet"/></svg></button>
                <button class="tb"><svg class="ic"><use href="#g-list"/></svg></button>
                <button class="tb"><svg class="ic"><use href="#g-grid"/></svg></button>
                <i class="sep"></i>
                <button class="tb"><svg class="ic"><use href="#g-flag"/></svg></button>
                <i class="sep"></i>
                <button class="tb"><svg class="ic"><use href="#g-stack"/></svg></button>
                <button class="tb"><svg class="ic"><use href="#g-report"/></svg></button>
                <i class="sep"></i>
                <button class="tb"><svg class="ic"><use href="#g-post"/></svg></button>
                <button class="tb"><svg class="ic"><use href="#g-wrench"/></svg></button>
                <button class="tb"><svg class="ic"><use href="#g-clock"/></svg></button>
                <button class="tb"><svg class="ic"><use href="#g-mach"/></svg></button><i class="dd low"></i>
            </div>
        </div>

        <div class="selectbar">
            <div class="filter-box"></div>
            <div class="snap">
                <i class="sep"></i>
                <button class="sb wide-sb"><svg class="ic20"><use href="#select-box"/></svg></button><i class="dd"></i>
                <i class="sep"></i>
                <button class="sb"><svg class="ic20"><use href="#blob"/></svg></button>
                <button class="sb pressed"><svg class="ic20"><use href="#shaded"/></svg></button>
                <i class="sep"></i>
                <button class="sb"><svg class="ic20"><use href="#s-move"/></svg></button>
                <button class="sb"><svg class="ic20"><use href="#s-move2"/></svg></button>
                <button class="sb"><svg class="ic20"><use href="#s-line"/></svg></button>
                <button class="sb"><svg class="ic20"><use href="#s-mid"/></svg></button>
                <button class="sb"><svg class="ic20"><use href="#s-curve"/></svg></button>
                <button class="sb"><svg class="ic20"><use href="#s-int"/></svg></button>
                <button class="sb"><svg class="ic20"><use href="#s-center"/></svg></button>
                <button class="sb"><svg class="ic20"><use href="#s-quad"/></svg></button>
                <button class="sb"><svg class="ic20"><use href="#s-plus"/></svg></button>
                <button class="sb"><svg class="ic20"><use href="#s-line"/></svg></button>
                <button class="sb"><svg class="ic20"><use href="#s-face"/></svg></button>
                <i class="sep"></i>
                <button class="sb"><svg class="ic20"><use href="#s-grid"/></svg></button>
                <i class="dd low last"></i>
            </div>
        </div>

        <div class="cue">
            <b class="cue-text">选择子工序</b>
            <span class="cue-status"></span>
            <span class="cue-cell"></span>
            <span class="cue-cell wide-cell"></span>
            <button class="cue-fit" aria-label="全屏"><svg><use href="#fit"/></svg></button>
        </div>

        <main class="work">
            <div class="resource">
                <button class="tab"><svg class="ic"><use href="#r-asm"/></svg></button>
                <button class="tab"><svg class="ic"><use href="#r-con"/></svg></button>
                <button class="tab"><svg class="ic"><use href="#r-part"/></svg></button>
                <button class="tab active"><svg class="ic"><use href="#r-op"/></svg></button>
                <button class="tab"><svg class="ic"><use href="#r-feat"/></svg></button>
                <button class="tab"><svg class="ic"><use href="#r-mach"/></svg></button>
                <button class="tab"><svg class="ic"><use href="#r-books"/></svg></button>
                <button class="tab apart"><svg class="ic"><use href="#r-info"/></svg></button>
                <button class="tab apart"><svg class="ic"><use href="#r-web"/></svg></button>
                <div class="tab-scroll">
                    <button class="off"><svg viewBox="0 0 14 14"><path d="M3 3h8" stroke="#aaa"/><path d="M7 5l4 4H3z" fill="#aaa"/></svg></button>
                    <button class="off"><svg viewBox="0 0 14 14"><path d="M7 5l4 4H3z" fill="#aaa"/></svg></button>
                    <button><svg viewBox="0 0 14 14"><path d="M7 9l4-4H3z" fill="#333"/></svg></button>
                    <button><svg viewBox="0 0 14 14"><path d="M3 11h8" stroke="#333"/><path d="M7 9l4-4H3z" fill="#333"/></svg></button>
                </div>
            </div>

            <section class="navigator">
                <h2><svg class="ic12"><use href="#pin"/></svg>工序导航器</h2>
                <div class="tree">
                    <div class="tree-head">名称</div>
                    <div class="tree-body">
                        <div class="tree-row">NC_PROGRAM</div>
                        <div class="tree-row child"><svg class="ic14"><use href="#op-folder"/></svg>未用项</div>
                        <div class="tree-row sel"><span class="plus">+</span><svg class="ic14"><use href="#bang"/></svg><svg class="ic14"><use href="#op-folder"/></svg><span class="mark">PROGRAM</span></div>
                    </div>
                    <div class="hscroll"><button aria-label="向左"><svg viewBox="0 0 14 14"><path d="M9 3L5 7l4 4" fill="none" stroke="#224a90" stroke-width="2"/></svg></button><span class="hthumb"></span></div>
                </div>
                <div class="sash"></div>
                <h3>相依性</h3>
                <h3>细节</h3>
            </section>

            <section class="graphics">
                <svg class="scene" viewBox="412 195 547 464" preserveAspectRatio="xMinYMin meet" role="img" aria-label="零件">
                    <defs>
                        <linearGradient id="surf" x1="0" y1="0" x2="1" y2="0"><stop offset="0" stop-color="#d9eaee"/><stop offset=".3" stop-color="#d3e6eb"/><stop offset=".46" stop-color="#a3b4b9"/><stop offset=".62" stop-color="#d3e6eb"/><stop offset="1" stop-color="#d9ebef"/></linearGradient>
                        <linearGradient id="hole" x1="0" y1="0" x2="1" y2="0"><stop offset="0" stop-color="#5d6465"/><stop offset=".45" stop-color="#353a3b"/><stop offset="1" stop-color="#6a7172"/></linearGradient>
                        <linearGradient id="bore" x1="0" y1="0" x2="1" y2="0"><stop offset="0" stop-color="#7b8384"/><stop offset=".5" stop-color="#3e4445"/><stop offset="1" stop-color="#7d8586"/></linearGradient>
                        <linearGradient id="body" x1="0" y1="0" x2="1" y2="0"><stop offset="0" stop-color="#06101e"/><stop offset=".4" stop-color="#04080e"/><stop offset="1" stop-color="#07111f"/></linearGradient>
                        <linearGradient id="rod" x1="0" y1="0" x2="1" y2="0"><stop offset="0" stop-color="#3c3a3c"/><stop offset=".45" stop-color="#777477"/><stop offset="1" stop-color="#343234"/></linearGradient>
                        <linearGradient id="dome" x1="0" y1="0" x2=".2" y2="1"><stop offset="0" stop-color="#e4f0f3"/><stop offset=".45" stop-color="#8f9da1"/><stop offset="1" stop-color="#e8f2f4"/></linearGradient>
                        <radialGradient id="tip" cx=".4" cy=".35"><stop offset="0" stop-color="#ff3030"/><stop offset="1" stop-color="#b00000"/></radialGradient>
                        <clipPath id="boreclip"><ellipse cx="611" cy="495" rx="54" ry="37"/></clipPath>
                    </defs>
                    <!-- part -->
                    <path d="M487 412L681 405C725 404 744 416 761 432C785 453 803 456 824 457L843 628C806 628 791 612 774 597C758 583 747 577 722 576L700 577L503 617L503 553Z" fill="#d9eaee" stroke="#444" stroke-width="1"/>
                    <path d="M681 405C725 404 744 416 761 432C785 453 803 456 824 457L843 628C806 628 791 612 774 597C758 583 747 577 722 576L700 577Z" fill="url(#surf)" stroke="#3c4a4e"/>
                    <path d="M487 412L503 553V653L485 483Z" fill="#505657" stroke="#333"/>
                    <path d="M503 616L684 577H722C747 577 758 583 774 597C791 612 806 628 844 628V642L680 648L503 653Z" fill="#363c3d"/>
                    <path d="M503 553L682 547L685 580L684 610L503 616Z" fill="#b3c5ca" stroke="#39464a"/>
                    <g stroke="#20292c">
                        <ellipse cx="545" cy="432" rx="17" ry="13" fill="url(#dome)"/>
                        <ellipse cx="598" cy="431" rx="28" ry="13" fill="url(#hole)"/>
                        <ellipse cx="549" cy="462" rx="16" ry="11" fill="url(#hole)"/>
                        <ellipse cx="667" cy="458" rx="16" ry="11" fill="url(#hole)"/>
                        <ellipse cx="680" cy="493" rx="14" ry="9" fill="url(#dome)"/>
                        <ellipse cx="675" cy="529" rx="15" ry="11" fill="url(#hole)"/>
                        <ellipse cx="557" cy="533" rx="16" ry="10" fill="url(#hole)"/>
                        <path d="M658 416L647 432C648 443 678 443 679 432L670 416Z" fill="#a9b7ba"/>
                        <path d="M658 416C661 424 668 424 670 416L664 412Z" fill="#e4eff2" stroke="none"/>
                        <ellipse cx="611" cy="495" rx="54" ry="37" fill="url(#bore)"/>
                    </g>
                    <ellipse cx="611" cy="521" rx="54" ry="38" fill="#dcecf0" stroke="#20292c" clip-path="url(#boreclip)"/>
                    <path d="M502 466Q502 455 514 454Q524 455 526 463L533 535Q532 544 521 544Q511 543 510 535Z" fill="#dcecf0" stroke="#20292c"/>
                    <path d="M502 466Q502 455 514 454Q524 455 526 463L533 535L529 534L524 484Q522 478 514 478Q504 479 503 484Z" fill="#4a5152"/>
                    <ellipse cx="555" cy="583" rx="23" ry="24" fill="#3a4143"/><ellipse cx="553" cy="583" rx="24" ry="24" fill="#b3c5ca" stroke="#20292c"/>
                    <ellipse cx="619" cy="581" rx="23" ry="24" fill="#3a4143"/><ellipse cx="617" cy="581" rx="24" ry="24" fill="#b3c5ca" stroke="#20292c"/>
                    <!-- probe -->
                    <circle cx="784" cy="512" r="12" fill="url(#tip)"/>
                    <path d="M781 400H796L794 505Q786 512 778 505Z" fill="url(#rod)"/>
                    <path d="M735 267L732 370C735 418 844 418 847 370L851 267Z" fill="url(#body)" stroke="#1c1c1c"/>
                    <ellipse cx="793" cy="267" rx="58" ry="39" fill="#0c1d3f" stroke="#28282c" stroke-width="1.500"/>
                    <g stroke="#7f9078" fill="#c8b850">
                        <path d="M793 265V241M793 266H814" fill="none"/><path d="M793 241l-3 13h6z" stroke="none" fill="#c09838"/><path d="M830 266l-16-3v6z" stroke="none"/>
                        <path d="M786 511H806" fill="none"/><path d="M820 510l-16-2v5z" stroke="none" fill="#a89850"/>
                    </g>
                    <g class="axis">
                        <text x="785" y="239" fill="#9db0c4">X</text><text x="792" y="241" fill="#9db0c4">Z</text><text x="824" y="262" fill="#9db0c4">Y</text>
                        <text x="815" y="506" fill="#93968a">Y</text>
                    </g>
                    <!-- tool path -->
                    <g fill="none" stroke-width="3" stroke-linejoin="round" stroke-linecap="round">
                        <path d="M509 380L507 434M458 428L455 522H482M521 524L518 586M658 522L655 586M598 436L594 514L569 516M628 436L625 513L647 512M611 430L608 503L603 488M614 445L612 531M719 544L715 636M714 622V632M768 465L778 459" stroke="#0808f0"/>
                        <path d="M745 391L620 424L600 434L598 438L616 445L628 434L612 425L510 376L521 524L658 521M458 428L719 544" stroke="#f80808"/>
                        <path d="M719 544L785 485L783 546L766 558" stroke="#f8a030"/>
                    </g>
                    <path d="M782 485l-3 10h7z" fill="#e8e8e0"/>
                    <g class="axis"><text x="777" y="483" fill="#ccc">X</text><text x="783" y="485" fill="#ccc">Z</text></g>
                    <!-- work coordinate system -->
                    <path d="M505 653V606" stroke="#1030c0" stroke-width="2"/><path d="M505 594l-3 12h7z" fill="#1030c0"/>
                    <path d="M505 653L499 606" stroke="#20a030" stroke-width="2"/><path d="M498 600l-2 10h6z" fill="#20a030"/>
                    <path d="M504 653L540 651H580" fill="none" stroke="#d01818"/><path d="M585 651l-15-3v6zM545 652l-14-2v4z" fill="#d01818"/>
                    <g class="axis"><text x="491" y="592" fill="#1848d8">ZM</text><text x="505" y="597" fill="#20a030">M</text><text x="491" y="620" fill="#1848d8">ZC</text><text x="507" y="622" fill="#20a030">C</text><text x="537" y="648" fill="#c82020">XC</text><text x="574" y="647" fill="#c82020">XM</text></g>
                </svg>
            </section>
        </main>

        <div class="bottombar">
            <span class="grip"></span>
            <button class="tb"><svg class="ic"><use href="#g-parts"/></svg></button>
            <button class="tb"><svg class="ic"><use href="#g-holder"/></svg></button>
            <button class="tb"><svg class="ic"><use href="#g-geo"/></svg></button>
            <button class="tb"><svg class="ic"><use href="#g-method"/></svg></button>
        </div>

        <footer class="taskbar">
            <button class="start"><svg class="ic20"><use href="#xp"/></svg>开始</button>
            <div class="quick">
                <button aria-label="浏览器"><svg class="ic16"><use href="#ie"/></svg></button>
                <button aria-label="桌面"><svg class="ic16"><use href="#desk"/></svg></button>
                <button aria-label="工具"><svg class="ic16"><use href="#tim"/></svg></button>
                <span>»</span>
            </div>
            <div class="tasks">
                <button class="task"><svg class="ic16"><use href="#win-folder"/></svg>Camtasia...</button>
                <button class="task cn"><svg class="ic16"><use href="#win-folder"/></svg>我的电脑</button>
                <button class="task"><svg class="ic16"><use href="#win-folder"/></svg>Camtasia...</button>
                <button class="task"><svg class="ic16"><use href="#cam"/></svg>Camtasia...</button>
                <button class="task"><svg class="ic16"><use href="#rec"/></svg>Recordin...</button>
                <button class="task current"><svg class="ic16"><use href="#nx"/></svg>NX 8.5 -...</button>
            </div>
            <div class="lang">CH<svg class="ic16"><use href="#kbd"/></svg></div>
            <div class="tray">
                <button class="tray-more" aria-label="显示图标"><svg viewBox="0 0 16 16"><path d="M10 4L6 8l4 4" fill="none" stroke="#fff" stroke-width="2"/></svg></button>
                <svg class="ic12"><use href="#usb"/></svg>
                <span>21:05</span>
            </div>
        </footer>
    </div>

    <!-- Probing dialog, floats over the main window -->
    <div class="dialog" role="dialog" aria-labelledby="dlgTitle">
        <div class="dlg-title">
            <span class="dlg-gear"><svg class="ic14"><use href="#gear"/></svg></span>
            <h1 id="dlgTitle">探测</h1>
            <button class="dlg-close" aria-label="关闭"><svg viewBox="0 0 16 16"><path d="M4 4l8 8M12 4l-8 8" stroke="#fff" stroke-width="3"/></svg></button>
        </div>
        <div class="dlg-body">
            <button class="section">几何体<i class="chev"></i></button>
            <button class="section">工具<i class="chev up"></i></button>
            <div class="pane tool-pane">
                <div class="field">
                    <label for="toolSelect">刀具</label>
                    <span class="combo"><select id="toolSelect"><option>UGT0402_001</option></select></span>
                    <button class="sq" aria-label="新建刀具"><svg class="ic"><use href="#new-tool"/></svg></button>
                    <button class="sq" aria-label="编辑刀具"><svg class="ic"><use href="#edit-tool"/></svg></button>
                </div>
                <button class="section sub">输出<i class="chev"></i></button>
                <button class="section sub">换刀设置<i class="chev"></i></button>
            </div>
            <button class="section">刀轨设置<i class="chev"></i></button>
            <button class="section">子操作<i class="chev up"></i></button>
            <div class="pane ops-pane">
                <div class="ops-add"><span>添加新的子工序</span><button class="sq off" aria-label="添加"><svg class="ic"><use href="#add-pt"/></svg></button></div>
                <div class="ops-list">
                    <table>
                        <thead><tr><th class="c-name">名称</th><th>进给率</th><th class="c-end"></th></tr></thead>
                        <tbody>
                            <tr><td><svg class="ic14"><use href="#cross"/></svg><svg class="ic14"><use href="#clearance"/></svg><span>Clearance_Plane</span></td><td>0.0000</td><td></td></tr>
                            <tr><td><svg class="ic14"><use href="#ok"/></svg><svg class="ic14"><use href="#probe"/></svg><span>Probe_Surface_Point</span></td><td>0.0000</td><td></td></tr>
                            <tr><td><svg class="ic14"><use href="#ok"/></svg><svg class="ic14"><use href="#probe"/></svg><span>Probe_Surface_Point_1</span></td><td>0.0000</td><td></td></tr>
                            <tr class="selected"><td><svg class="ic14"><use href="#ok"/></svg><svg class="ic14"><use href="#probe"/></svg><span>Probe_Surface_Point_2</span></td><td>0.0000</td><td></td></tr>
                        </tbody>
                    </table>
                    <div class="vscroll">
                        <button aria-label="向上"><svg viewBox="0 0 14 14"><path d="M3 9l4-4 4 4" fill="none" stroke="#224a90" stroke-width="2"/></svg></button>
                        <span class="vthumb"></span>
                        <button aria-label="向下"><svg viewBox="0 0 14 14"><path d="M3 5l4 4 4-4" fill="none" stroke="#224a90" stroke-width="2"/></svg></button>
                    </div>
                </div>
                <div class="pick-row">
                    <div class="pick"><svg class="ic14"><use href="#ok"/></svg>选择刀轨段 (1)</div>
                    <button class="sq hot" aria-label="曲线"><svg class="ic"><use href="#curve"/></svg></button>
                </div>
                <div class="btn-row">
                    <button class="sq off" aria-label="编辑"><svg class="ic"><use href="#wrench"/></svg></button>
                    <button class="sq off" aria-label="删除"><svg class="ic"><use href="#g-x"/></svg></button>
                    <button class="sq off" aria-label="剪切"><svg class="ic"><use href="#cut"/></svg></button>
                    <button class="sq off" aria-label="复制"><svg class="ic"><use href="#copy"/></svg></button>
                    <button class="sq off" aria-label="粘贴"><svg class="ic"><use href="#paste"/></svg></button>
                </div>
            </div>
            <button class="section">动画<i class="chev up"></i></button>
            <div class="pane anim-pane">
                <div class="speed">
                    <output class="now">1</output>
                    <label for="speed">速度</label>
                    <input type="range" id="speed" min="1" max="10" value="1">
                    <span class="min">1</span><span class="max">10</span>
                </div>
                <div class="btn-row">
                    <button class="sq off" aria-label="到起点"><svg class="ic"><use href="#first"/></svg></button>
                    <button class="sq off" aria-label="上一步"><svg class="ic"><use href="#prev"/></svg></button>
                    <button class="sq off" aria-label="倒放"><svg class="ic"><use href="#back"/></svg></button>
                    <button class="sq off" aria-label="播放"><svg class="ic"><use href="#play"/></svg></button>
                    <button class="sq off" aria-label="下一步"><svg class="ic"><use href="#next"/></svg></button>
                    <button class="sq off" aria-label="到终点"><svg class="ic"><use href="#last"/></svg></button>
                    <button class="sq" aria-label="停止"><svg class="ic"><use href="#stop"/></svg></button>
                </div>
                <div class="tip" role="tooltip">播放</div>
            </div>
            <button class="section">程序<i class="chev"></i></button>
            <button class="section">选项<i class="chev"></i></button>
            <button class="section">操作<i class="chev up"></i></button>
            <div class="pane act-pane">
                <div class="btn-row">
                    <button class="sq" aria-label="生成"><svg class="ic"><use href="#tool"/></svg></button>
                    <button class="sq" aria-label="重播"><svg class="ic"><use href="#replay"/></svg></button>
                    <button class="sq" aria-label="确认"><svg class="ic"><use href="#verify"/></svg></button>
                    <button class="sq" aria-label="列表"><svg class="ic"><use href="#list"/></svg></button>
                </div>
            </div>
            <div class="dlg-foot">
                <button class="cmd primary">确定</button>
                <button class="cmd">取消</button>
            </div>
        </div>
    </div>
</body>
</html>
```

FILE: styles.css
```css
* {
    box-sizing: border-box;
}
body {
    margin: 0;
    font-family: "Noto Sans", "Noto Sans CJK SC", sans-serif;
    font-size: 12px;
    line-height: 16px;
    color: #111;
    background: #e4e4e4;
}
button {
    font: inherit;
    color: inherit;
    padding: 0;
    border: none;
    background: none;
}
h1, h2, h3 {
    margin: 0;
    font-size: 12px;
}
svg {
    display: block;
    flex: none;
}
.sprite {
    position: absolute;
    width: 0;
    height: 0;
}
.ic { width: 22px; height: 22px; }
.ic20 { width: 20px; height: 20px; }
.ic16 { width: 16px; height: 16px; }
.ic14 { width: 14px; height: 14px; }
.ic12 { width: 12px; height: 12px; }

.app {
    display: flex;
    flex-direction: column;
    min-height: 100vh;
    overflow: hidden;
}

/* Title bar */
.titlebar {
    display: flex;
    align-items: center;
    height: 24px;
    padding: 0 3px;
    background: linear-gradient(#000 0, #000 1px, #666 2px, #3c3c3c 8px, #111 9px, #111);
    color: #fff;
}
.app-title {
    margin-left: 4px;
    font: bold 12px/16px "Liberation Mono", "Noto Sans CJK SC", monospace;
}
.brand {
    margin-left: auto;
    margin-right: 25px;
    font: 800 13px/16px "Open Sans", sans-serif;
}
.win-btn {
    width: 19px;
    height: 18px;
    margin-left: 3px;
    border: 1px solid #555;
    border-radius: 3px;
    background: linear-gradient(#666, #222);
}
.win-btn.close {
    background: linear-gradient(#ff8060, #e03018);
}

/* Menus and toolbars */
.menubar {
    display: flex;
    align-items: center;
    height: 25px;
    font-size: 11px;
    background: linear-gradient(#f2f2f2, #e6e6e6);
    border-bottom: 1px solid #d4d4d4;
}
.menu-left {
    display: flex;
    align-items: center;
    flex: none;
    width: 402px;
}
.menu-left button { margin: 0 5px; }
.menu-right {
    display: flex;
    gap: 12px;
}
.mdi {
    display: flex;
    gap: 3px;
    margin-left: auto;
    padding-right: 4px;
}
.mdi button {
    width: 15px;
    height: 15px;
    border: 1px solid #777;
    border-radius: 3px;
    background: #f4f4f4;
}
.mdi .off { border-color: #ccc; }
.grip {
    flex: none;
    width: 2px;
    height: 24px;
    margin: 0 2px 0 4px;
    background: repeating-linear-gradient(#aaa 0, #aaa 2px, transparent 2px, transparent 4px);
}
.toolbar {
    display: flex;
    align-items: center;
    justify-content: space-between;
    height: 32px;
    background: linear-gradient(#f0f0f0, #dcdcdc);
    border-bottom: 1px solid #d0d0d0;
}
.group {
    display: flex;
    align-items: center;
    flex: none;
}
.group.end {
    margin-left: auto;
    padding-right: 2px;
}
.start-nx {
    display: flex;
    align-items: center;
    gap: 3px;
    margin: 0 1px 0 3px;
    font-size: 11px;
}
.tb {
    display: flex;
    align-items: center;
    justify-content: center;
    flex: none;
    width: 28px;
    height: 28px;
}
.wide .tb { width: 29px; }
.arrow, .dd {
    flex: none;
    display: flex;
    justify-content: center;
    width: 12px;
}
.arrow { width: 8px; }
.arrow::before, .dd::before {
    content: "";
    border: 3px solid transparent;
    border-top-color: #111;
    border-bottom: 0;
}
.dd.low { padding-top: 14px; }
.sep {
    flex: none;
    width: 2px;
    height: 30px;
    margin: 0 2px;
    background: #cfcfcf;
    border-right: 1px solid #fafafa;
}
.more {
    display: flex;
    flex-direction: column;
    align-items: center;
    gap: 3px;
    width: 18px;
    font-size: 14px;
    font-weight: bold;
    line-height: 14px;
}
.more::after {
    content: "";
    border: 3px solid transparent;
    border-top-color: #111;
    border-bottom: 0;
}
.more.spaced { margin-left: 6px; }
.empty-left {
    background: #e2e2e2;
    border-bottom: 1px solid #999;
    height: 33px;
}
.row3 {
    height: 32px;
    border-left: 1px solid #fafafa;
    background: linear-gradient(#ececec, #dadada);
}
.selectbar {
    display: flex;
    align-items: center;
    height: 28px;
    background: linear-gradient(#ececec, #dedede);
}
.filter-box {
    flex: none;
    width: 400px;
    height: 19px;
    margin: 0 6px 0 5px;
    border: 1px solid #bbb;
    border-radius: 3px;
    background: #e2e2e2;
}
.snap {
    display: flex;
    align-items: center;
    flex: 1;
    padding-right: 2px;
}
.snap .sep { height: 24px; }
.sb {
    display: flex;
    align-items: center;
    justify-content: center;
    flex: none;
    width: 21px;
    height: 21px;
    margin-right: 1px;
}
.wide-sb { width: 24px; }
.sb.pressed {
    margin-right: 4px;
    border: 1px solid #554;
    border-radius: 3px;
    background: #fff;
}
.last { margin-left: auto; }
.cue {
    display: flex;
    align-items: stretch;
    height: 20px;
    background: #e8e8e8;
    border-top: 1px solid #f8f8f8;
}
.cue-text {
    flex: none;
    width: 443px;
    padding-left: 2px;
    line-height: 18px;
    border-right: 1px solid #ccc;
}
.cue-status { flex: 1; }
.cue-cell {
    width: 21px;
    border-left: 1px solid #ccc;
}
.wide-cell { width: 31px; }
.cue-fit {
    display: flex;
    align-items: center;
    justify-content: center;
    width: 21px;
    border-left: 1px solid #ccc;
}
.cue-fit svg {
    width: 13px;
    height: 13px;
}

/* Resource bar and navigator */
.work {
    display: flex;
    flex: 1;
}
.resource {
    display: flex;
    flex-direction: column;
    gap: 2px;
    flex: none;
    width: 31px;
    padding-top: 17px;
    background: #b9b9b9;
    border-top: 1px solid #888;
    border-right: 1px solid #444;
}
.tab {
    display: flex;
    align-items: center;
    justify-content: center;
    width: 24px;
    height: 37px;
    margin-left: 6px;
    border: 1px solid #777;
    border-right: none;
    border-radius: 3px 0 0 3px;
    background: linear-gradient(90deg, #f0f0f0, #d4d4d4);
}
.tab.active {
    width: 26px;
    margin-left: 4px;
    background: #f2f2f2;
}
.tab.apart { margin-top: 12px; }
.tab-scroll {
    display: flex;
    flex-direction: column;
    gap: 1px;
    margin: 8px 0 0 9px;
}
.tab-scroll button {
    width: 15px;
    height: 14px;
    border: 1px solid #888;
    background: #eee;
}
.tab-scroll .off { border-color: #bbb; }
.navigator {
    display: flex;
    flex-direction: column;
    flex: none;
    width: 381px;
    padding: 0 0 4px 9px;
    background: #ececec;
    border-top: 1px solid #999;
}
.navigator h2 {
    display: flex;
    align-items: center;
    gap: 11px;
    height: 30px;
    padding-left: 4px;
}
.tree {
    display: flex;
    flex-direction: column;
    flex: 1;
    border: 1px solid #555;
    border-right: none;
    background: #f7f7f7;
}
.tree-head {
    height: 18px;
    padding-left: 6px;
    background: linear-gradient(#f4f4f4, #dedede);
}
.tree-body {
    flex: 1;
    background: repeating-linear-gradient(#f7f7f7 0, #f7f7f7 18px, #e2e2e2 18px, #e2e2e2 19px);
}
.tree-row {
    display: flex;
    align-items: center;
    height: 19px;
    padding-left: 4px;
    font-size: 11px;
    color: #444;
}
.tree-row.child {
    gap: 3px;
    padding-left: 19px;
    color: #111;
}
.plus {
    width: 9px;
    height: 9px;
    margin-right: 9px;
    border: 1px solid #888;
    background: #fff;
    line-height: 7px;
    text-align: center;
}
.mark {
    padding: 0 3px;
    line-height: 18px;
    color: #fff;
    background: #1c5ad0;
}
.hscroll {
    display: flex;
    gap: 2px;
    height: 17px;
    padding: 1px 2px;
}
.hscroll button, .vscroll button {
    width: 14px;
    height: 14px;
    border-radius: 2px;
    background: #c8dafc;
}
.hthumb {
    width: 24px;
    height: 14px;
    border: 1px solid #a8c0f0;
    border-radius: 2px;
    background: #c4d6fa;
}
.sash { height: 12px; }
.navigator h3 {
    height: 22px;
    padding-left: 6px;
    line-height: 20px;
    background: linear-gradient(#f6f6f6, #e0e0e0);
    border-bottom: 1px solid #b4b4b4;
}

/* Graphics window */
.graphics {
    display: flex;
    flex: 1;
    min-width: 0;
    border: 1px solid #e8a040;
    border-left: none;
    background: linear-gradient(#bfc0c2, #d8d8da 40%, #ececee);
}
.scene {
    flex: 1;
    width: 100%;
    min-width: 0;
}
.axis text {
    font: 10px "Liberation Sans", sans-serif;
}
.bottombar {
    display: flex;
    align-items: center;
    height: 32px;
    background: linear-gradient(#f0f0f0, #dadada);
}

/* Taskbar */
.taskbar {
    display: flex;
    align-items: stretch;
    height: 28px;
    color: #fff;
    background: linear-gradient(#3a80f0, #2460e0 15%, #2258dc 85%, #1a40a8);
    font: 10px/16px "Liberation Mono", "Noto Sans CJK SC", monospace;
}
.start {
    display: flex;
    align-items: center;
    flex: none;
    gap: 5px;
    width: 90px;
    padding-left: 9px;
    border-radius: 0 8px 8px 0;
    background: linear-gradient(#5cb85c, #2f8f2f 25%, #2e8a2e 80%, #1d5c1d);
    font: italic 18px/20px "Noto Sans CJK SC", sans-serif;
}
.quick {
    display: flex;
    align-items: center;
    gap: 6px;
    flex: none;
    width: 97px;
    padding-left: 11px;
}
.quick span {
    padding-bottom: 8px;
    font-size: 13px;
}
.tasks {
    display: flex;
    gap: 2px;
    flex: 1;
    padding: 2px 0;
}
.task {
    display: flex;
    align-items: center;
    gap: 3px;
    flex: 1;
    max-width: 104px;
    padding-left: 7px;
    border-radius: 2px;
    background: linear-gradient(#5a9cff, #3c80f4 20%, #3474ec);
    white-space: nowrap;
}
.task.cn { font-size: 12px; }
.task.current { background: #1c48b4; }
.lang {
    display: flex;
    align-items: center;
    gap: 6px;
    width: 68px;
    padding-left: 10px;
    font-size: 11px;
}
.tray {
    display: flex;
    align-items: center;
    gap: 6px;
    width: 71px;
    padding-right: 10px;
    background: linear-gradient(#40b8f8, #1498e8 20%, #1290e4 85%, #1068b8);
    font-size: 10px;
}
.tray-more {
    flex: none;
    width: 14px;
    height: 14px;
    margin-left: -8px;
    border-radius: 50%;
    background: #3aa0f8;
}

/* Dialog */
.dialog {
    position: absolute;
    left: 116px;
    top: 0;
    width: 296px;
    border-bottom: 8px solid #111;
    border-radius: 3px 3px 6px 6px;
    background: #ebebeb;
}
.dlg-title {
    display: flex;
    align-items: center;
    height: 21px;
    border-radius: 3px 3px 0 0;
    color: #fff;
    background: linear-gradient(#111 0, #666 2px, #333 7px, #0c0c0c 8px, #0c0c0c);
}
.dlg-gear {
    width: 20px;
    height: 19px;
    padding: 3px 0 0 3px;
    border-right: 1px solid #888;
}
.dlg-title h1 {
    flex: 1;
    padding-left: 7px;
    font-size: 15px;
    line-height: 18px;
}
.dlg-close {
    width: 19px;
    height: 19px;
    border-left: 1px solid #888;
}
.dlg-body {
    padding: 3px 5px 0 6px;
    border: solid #8a8a8a;
    border-width: 0 1px;
}
.section {
    display: flex;
    align-items: stretch;
    justify-content: space-between;
    width: 100%;
    height: 22px;
    padding-left: 4px;
    border-bottom: 1px solid #a0a0a0;
    background: linear-gradient(#fafafa, #dfdfdf);
    font-weight: bold;
    line-height: 21px;
}
.chev {
    display: flex;
    align-items: center;
    justify-content: center;
    width: 22px;
    border-left: 1px solid #ccc;
}
.chev::before {
    content: "";
    width: 8px;
    height: 8px;
    margin-bottom: 4px;
    border: solid #555;
    border-width: 0 2px 2px 0;
    transform: rotate(45deg);
}
.chev.up::before {
    margin: 4px 0 0;
    transform: rotate(225deg);
}
.pane {
    padding: 6px 8px 0 6px;
    border: solid #a8a8a8;
    border-width: 0 1px;
    background: #dcdcdc;
}
.tool-pane { height: 90px; }
.ops-pane { height: 210px; }
.anim-pane {
    position: relative;
    height: 102px;
}
.act-pane {
    height: 43px;
    border-bottom: 1px solid #f8f8f8;
}
.sub {
    height: 21px;
    margin-top: 2px;
    padding-left: 7px;
    border: 1px solid #aaa;
    background: #cecece;
    line-height: 19px;
}
.sub .chev { border-left: none; }
.field {
    display: flex;
    align-items: flex-start;
    gap: 4px;
}
.field label {
    flex: 1;
    line-height: 20px;
}
.combo {
    position: relative;
    width: 99px;
}
.combo::after {
    content: "";
    position: absolute;
    right: 6px;
    top: 8px;
    border: 4px solid transparent;
    border-top: 5px solid #112;
    border-bottom: 0;
    pointer-events: none;
}
.combo select {
    width: 100%;
    height: 20px;
    padding: 0 18px 0 3px;
    border: 1px solid #444;
    border-radius: 3px;
    appearance: none;
    font: 12px/16px "Noto Sans", sans-serif;
    color: #222;
    background: linear-gradient(#4a90e8, #8cd0f8) right / 16px 100% no-repeat #fff;
}
.sq {
    display: flex;
    align-items: center;
    justify-content: center;
    flex: none;
    width: 28px;
    height: 29px;
    border: 1px solid #777;
    border-radius: 3px;
    background: linear-gradient(#fdfdfd, #eee 55%, #ddd 56%, #f0f0f0);
}
.sq.off {
    border-color: #b8b8b8;
    background: #ebebeb;
}
.sq.hot {
    border-color: #b05818;
    background: linear-gradient(#ffd0a0, #ff8830 60%, #ffc070);
}
.ops-add {
    display: flex;
    justify-content: space-between;
    height: 31px;
}
.ops-list {
    position: relative;
    height: 102px;
    border: 1px solid #555;
    background: #f7f7f7;
    overflow: hidden;
}
.ops-list table {
    width: 100%;
    table-layout: fixed;
    border-collapse: collapse;
}
.ops-list th {
    height: 18px;
    padding: 0 4px;
    line-height: 17px;
    text-align: left;
    font-weight: normal;
    border-left: 1px solid #aaa;
    border-bottom: 1px solid #aaa;
    background: linear-gradient(#f6f6f6, #dedede);
}
.ops-list .c-name {
    width: 184px;
    padding-left: 6px;
    border-left: none;
}
.ops-list .c-end { width: 17px; }
.ops-list td {
    height: 19px;
    padding: 0 0 0 4px;
    border-bottom: 1px solid #e8e8e8;
    border-left: 1px solid #ccc;
    color: #444;
    white-space: nowrap;
}
.ops-list td:first-child {
    display: flex;
    align-items: center;
    gap: 1px;
    padding-left: 19px;
    border-left: none;
}
.ops-list td span {
    flex: 1;
    padding-left: 2px;
}
.ops-list .selected td:nth-child(2), .ops-list .selected span {
    color: #fff;
    background: #1c5ad0;
}
.ops-list .selected span { line-height: 18px; }
.vscroll {
    position: absolute;
    right: 0;
    top: 19px;
    bottom: 0;
    display: flex;
    flex-direction: column;
    align-items: center;
    width: 17px;
    background: #f4f4f8;
}
.vthumb {
    width: 14px;
    height: 14px;
    margin: 4px 0 auto;
    border-radius: 2px;
    background: #c4d6fa;
}
.pick-row {
    display: flex;
    justify-content: space-between;
    margin-top: 2px;
}
.pick {
    display: flex;
    align-items: center;
    gap: 3px;
    flex: 1;
    border-radius: 5px;
    background: linear-gradient(90deg, #e3ab60, #e6bd88 45%, #dcdcdc);
}
.btn-row {
    display: flex;
    justify-content: center;
    gap: 4px;
}
.ops-pane .btn-row { margin-top: 3px; }
.speed {
    display: grid;
    grid-template-columns: 32px 1fr 20px;
    align-items: center;
    height: 59px;
    padding: 0 15px 0 22px;
    color: #444;
}
.speed .now {
    grid-column: 2 / 4;
    padding-left: 3px;
}
.speed label {
    grid-column: 1;
    color: #111;
}
.speed input {
    grid-column: 2 / 4;
    width: 173px;
    height: 18px;
    margin: 0;
    appearance: none;
    background: linear-gradient(#999, #999) center / 100% 1px no-repeat;
}
.speed input::-webkit-slider-thumb {
    appearance: none;
    width: 9px;
    height: 17px;
    border: 1px solid #28588c;
    border-radius: 5px 5px 2px 2px;
    background: linear-gradient(#e0f8ff, #58c8f8);
}
.speed .min { grid-column: 2; }
.speed .max {
    grid-column: 3;
    text-align: center;
}
.tip {
    position: absolute;
    left: 117px;
    top: 98px;
    z-index: 1;
    width: 38px;
    height: 29px;
    border: 1px solid #aaa;
    border-radius: 5px;
    background: #f6f6f6;
    line-height: 27px;
    text-align: center;
}
.dlg-foot {
    display: flex;
    justify-content: flex-end;
    gap: 7px;
    height: 38px;
    padding: 8px 9px 0 0;
}
.cmd {
    width: 49px;
    height: 20px;
    border: 1px solid #666;
    border-radius: 3px;
    background: linear-gradient(#fdfdfd, #ddd 60%, #f0f0f0);
    line-height: 16px;
}
.cmd.primary {
    border-color: #3c6c2c;
    background: linear-gradient(#d0f8b8, #68d048 60%, #a8f080);
}
```
